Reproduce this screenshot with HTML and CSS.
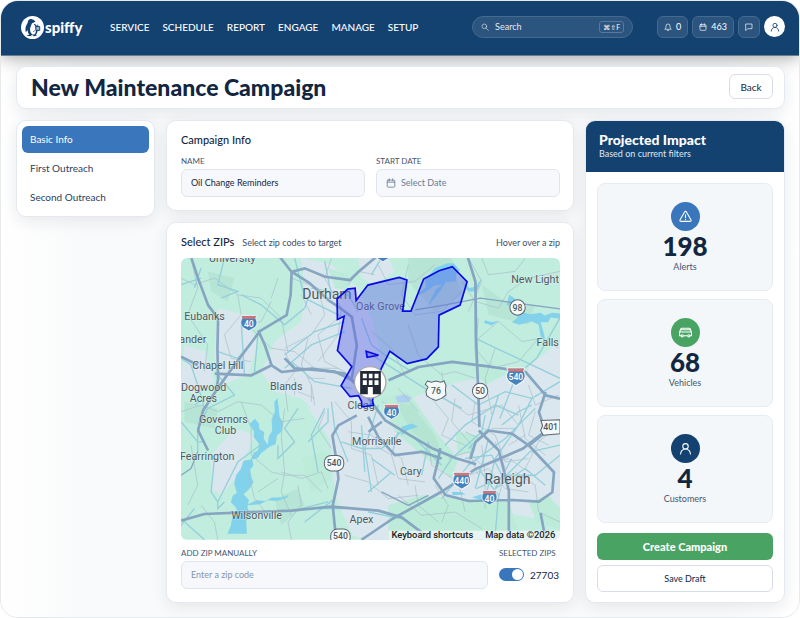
FILE: index.html
```html
<!DOCTYPE html>
<html lang="en">
<head>
<meta charset="utf-8">
<meta name="viewport" content="width=device-width, initial-scale=1">
<title>New Maintenance Campaign</title>
<link rel="stylesheet" href="styles.css">
</head>
<body>
<svg class="defs" width="0" height="0" aria-hidden="true">
  <symbol id="calendar" viewBox="0 0 24 24"><rect x="3" y="5" width="18" height="17" rx="2"/><path d="M3 10h18M8 2v5M16 2v5"/></symbol>
  <symbol id="person" viewBox="0 0 24 24"><circle cx="12" cy="8" r="5"/><path d="M3 22c0-5 4-9 9-9s9 4 9 9"/></symbol>
  <symbol id="shield" viewBox="0 0 64 56"><path d="M6 3h52l-4 8c9 14 5 28-7 34l-15 9-15-9C5 39 1 25 10 11z" fill="#4583bf" stroke="#f5f8fa" stroke-width="3"/><path d="M8 5h48l-4 8H12z" fill="#d9736f"/></symbol>
</svg>
<div class="app">
  <header class="topbar">
    <a class="logo" href="#" aria-label="Spiffy home">
      <svg viewBox="0 0 48 48" aria-hidden="true">
        <circle cx="24" cy="24" r="24" fill="#fff"/>
        <path d="M23 7c-5-2-9 2-9 7-4 6-6 12-4 20l4-5c0 5 2 9 5 11h7c-5-3-8-8-7-14 1-5 3-8 4-11l7-3c-2-3-4-4-7-5z" fill="#134170"/>
        <path d="M26 16c5 5 7 13 4 20l-3 4h4c4-5 5-12 3-17-1-4-4-7-8-7z" fill="#134170"/>
        <path d="M11 41l8-3 3 4zM25 38l9 2-8 3z" fill="#134170"/>
        <path d="M31 22h8v8h-8zM29 30l-3 3M35 22v-4" fill="#9fb6cc" stroke="#134170" stroke-width="2"/>
      </svg>
      <span>spiffy</span>
    </a>
    <nav class="menu" aria-label="Main">
      <a href="#">SERVICE</a><a href="#">SCHEDULE</a><a href="#">REPORT</a><a href="#">ENGAGE</a><a href="#">MANAGE</a><a href="#">SETUP</a>
    </nav>
    <label class="search">
      <svg class="icon" viewBox="0 0 24 24"><circle cx="10" cy="10" r="7"/><path d="M15 15l7 7"/></svg>
      <input type="search" placeholder="Search" aria-label="Search">
      <kbd>⌘⇧F</kbd>
    </label>
    <div class="actions">
      <button class="chip" aria-label="Notifications"><svg class="icon" viewBox="0 0 24 24"><path d="M3 18c2-2 3-4 3-9a6 6 0 0 1 12 0c0 5 1 7 3 9zM10 22h4"/></svg>0</button>
      <button class="chip" aria-label="Appointments"><svg class="icon"><use href="#calendar"/></svg>463</button>
      <button class="chip" aria-label="Messages"><svg class="icon" viewBox="0 0 24 24"><path d="M3 3h18v14H8l-5 5z"/></svg></button>
      <button class="avatar" aria-label="Account"><svg class="icon"><use href="#person"/></svg></button>
    </div>
  </header>

  <div class="page">
    <section class="card titlebar">
      <h1>New Maintenance Campaign</h1>
      <button class="outline back">Back</button>
    </section>

    <div class="columns">
      <nav class="card steps" aria-label="Campaign steps">
        <a class="current" href="#">Basic Info</a>
        <a href="#">First Outreach</a>
        <a href="#">Second Outreach</a>
      </nav>

      <main class="content">
        <section class="card panel">
          <h2>Campaign Info</h2>
          <div class="pair">
            <div>
              <label class="caption" for="name">NAME</label>
              <div class="field"><input id="name" type="text" value="Oil Change Reminders"></div>
            </div>
            <div>
              <label class="caption" for="date">START DATE</label>
              <div class="field"><svg class="icon"><use href="#calendar"/></svg><input id="date" class="date" type="text" placeholder="Select Date"></div>
            </div>
          </div>
        </section>

        <section class="card panel">
          <div class="maphead"><h2>Select ZIPs</h2><span>Select zip codes to target</span><span class="hint">Hover over a zip</span></div>
          <svg class="map" viewBox="0 0 1134 843" role="img" aria-label="Map of zip codes around Durham and Raleigh">
            <rect width="1134" height="843" fill="#c1eddf"/>
            <g fill="#dae7ee">
              <path d="M360 0l90 20 80 70 40 90 30 120-10 100-60 70-110 10-60-60-80-20-40-60 40-90 80-60 10-90z"/>
              <path d="M110 150l80 20 40 90-30 90-80 30-20-90z"/>
              <path d="M380 450l120-20 130 40 80-60 120-40 150-20 154 60v330l-60 40-130-20-70 50-160-10-90 60-110-30-50-110-20-180z"/>
              <path d="M1134 250l-90 70-50 110 90 50 50-30zM530 0l90 0 20 40-60 40-40-20z"/>
              <path d="M90 590l70-80 60 20-50 120-50 60-30-20zM10 260l60 20 30 90-60 40-40-30z"/>
            </g>
            <g fill="#bcebd9">
              <path d="M600 420l80-20 90 130 60 70-20 60-100-80-70-60z"/>
              <path d="M620 740l100-30 120 10 140 10 40 113H620zM360 600l70-20 20 80-60 40zM820 520l70 10-10 50-50 10zM440 30l60 20 10 50-50-10z"/>
              <path d="M870 330l60-20 40 40-60 30zM1040 730l60-20 34 40v60l-70-20z"/>
            </g>
            <g fill="#b1dfcf" opacity=".6">
              <path d="M680 0l130 0 30 110-80 50-80-90zM900 80l100 70 60-10-20 60-120-30zM80 40l80 20-20 70-50-30zM280 720l70-30 20 50-70 60z"/>
              <path d="M10 430l100 20-10 60-90-20zM640 430l50 10 70 90 20 60-90-70z"/>
            </g>
            <g fill="#82d2eb">
              <path d="M221 481l12 14 2 18 14 8-2 18 12 20 4-26 10-16-2-34 10-24-2-28 10-12 4 34 2 22 10 18-4 26-14 12-4 26-18 8-24 18-12 16-16 4 4 18-10 12 4 24 6 14-14 22-16 14 16 16-4 24 8 18-12 22 2 38h-58l10-24 4-22 20-14-10-20-14-14 6-20 12-8-8-28 6-26 14-18 8-24 22-4 8-20 14-8 2-20-16-20 2-14-14-24z"/>
              <path d="M196 739l30-14 26 2 20-10 30 0 20-8-4 8-30 10-28-2-24 12-28 2z"/>
              <path d="M760 30l36-14 20 0 18 20-10 12-2 22-30 2-14 24-40 50 24-52 20-14-24 2-24 18-34 16 34-30-4-18zM848 70l14 20 20-4 18-26-12 34-20 8-14-8z"/>
              <path d="M982 110l18 12-4 14 16 24 34 8 30-4 12 8 22-8 26 2v16l-30-4-8 14-22 0 10 34 4 24-14-16-6-34-20-10-38 10-22-8 18-14-20-30-14-8zM910 186l20 6 20-4-20 14-24-8zM660 505l30-10 20 10-30 10-20 16zM810 700l30 0 12 8-38 2zM870 716l40-12 20 10-30 10z"/>
              <path d="M640 416l30-8 20 10-10 14-30 0z" fill="#afcff0"/>
            </g>
            <g class="minor">
              <path d="M0 60l40 20 60-20 70 50 70 10 60 60 20 100M30 0l20 90-30 80 60 90-10 80M170 110l10 60-50 60 20 70 60 10M330 60l80 30 20 80-40 60-80 40M450 0l-20 60 50 90-10 80-60 80M470 180l-60 50 20 80 60 30M210 210l60 60 70 10 60 50 70 0M310 280l30 60-30 40 10 80M380 240l-20 80 30 60 10 60M0 460l60-20 50 20 60-30 70 10 60 50 70-10M180 430l30 80 0 80 60 50 40 10 60 0 50 50M310 450l-10 80 10 110-10 60 30 70M200 640l20 80 50 60M30 560l20 120-30 60M60 740l40 50 10 53M300 640l60 20 60-20 20 50M230 700l60-40M350 680l10 60-40 50 10 53"/>
              <path d="M590 20l30 60 80-10 60-50M680 20l-20 90 40 60 80-10 60-60M840 70l40 60 70 20 30-50 60-40 94-20M900 0l20 50 80-10 30-40M860 0l40 70-40 90M890 240l60-50 70 60 60-10 50 30M890 180l-10 90 50 60 80-20 60-70M680 200l30 90 70 60 40-10 60 20M570 220l60 50 40 80M780 340l10 80 70 50 100-30 50 60M940 270l-30 90 20 110M750 420l50 60-20 50 70 30"/>
              <path d="M460 430l50 60 0 80 60 20 20 90M500 520l70 10 90 70 20 80M490 650l70 20 60 50 90-10M580 560l50 30 20 70 80 10M740 550l10 70 80 50 20 90M820 420l-10 70 60 70-10 60M880 430l-10 60 70 40 30 80 70-10M800 600l60-20 40 40 80-20 60 40M860 650l60-20 50 60 70 10M900 560l10 90 0 100M940 550l30 80-20 90M1010 440l20 100 60 50M1060 460l-20 70 60 30M1130 500l-60 50-40 80M1000 640l60 40 10 80 64 30M650 710l70 60 100-10 80 50M700 680l10 60 60 50M760 680l40 60-20 50"/>
              <path d="M600 430l50 30M650 390l60 70M430 460l-20 50 40 60M380 360h50M340 360v50M390 380v50M350 400l50 20M180 210l60-20 30-60M270 120l20-60M360 110l30 60M500 80l30-40 50 10M1040 380l20 60 70-30M980 560l50-30M930 510h70M850 520l40 20M870 600l20 50M960 650l-20 40"/>
            </g>
            <g class="street">
              <path d="M60 30l-20 60M130 0l-20 80 60 20-50 20M0 80l60-20M0 300l30 20 20 60 20 70M180 110l60 30 70 60 60-50 10-30M110 280l60 20 60-70-10 110M180 190l10 160M110 350l50 60-80 40-30 60 0 70M0 490l50 60 20 0M40 440l30-20M350 450l-40 60 30 40-50 50 0-40M430 450l-40 80 20 110M440 450v40l-60 60M100 600l-10 100 20 30 60-120 80-60M110 730l0 20 20-20"/>
              <path d="M340 0l30 120M370 120l120 60M430 10l20 100M530 160l-30-50-110-20M310 290l90-70 90-30M330 310l70 60 110 20M490 220l-100 40-80 70M540 180l30 80 40 30 80 50M600 0l-30 50M880 70l0 200 10 120 0 100M880 240l254 120M570 290l160 100 110 60M810 380l80 60 80-40 80 20 84-50M1134 180l-70 120-60 50-50 130M450 430l10 80 40 100M540 500l10 140M590 440l-40 130 20 130M480 550l60 20 60 0 70-60M570 600l70 50M740 550l-20 100M790 560l60-60 90-60 70 30M560 700l70-60M770 660l40-60 90-80 10-50M950 410l-30 100-60 60M1050 420l-40 80-70 100-30 120M960 500l50-40 40-20M850 600l80-10 30 60 100 0 74-60M890 630l60 80-10 120M920 540l-20 80-20 70M990 600l-50 90M780 720l80-100 110-80 90-90M940 690l90-60 60 50M560 760l100 20M370 790l90-70M1134 560l-90 20-70 70-90 40"/>
              <path d="M0 800l40-50M0 780l70 63M360 750l80-20M500 750l-90 0M650 520l-20 70M700 540l80 80"/>
            </g>
            <g class="highway">
              <path d="M31 0l20 61 30 80 30 40-2 90 2 90-5 35-40 60-15 60 30 60M106 396l35-50 95-127 80-48 12-60 3-69-35-45M1091 843l-15-80"/>
              <path d="M591-9l-60 50-25 25-75-10-60-25-40 10 55 35 55 50 30 20 40 30 15 85-15 100M231 216l20 45 20 60 30 20 90-10 100 15 60 60 60 80 75 45 65 38 72 30 60 18"/>
              <path d="M0 295l50 25M271 321l-60 30-110-5M310 300l30 30 120 10 60 30"/>
              <path d="M621 366l90-40 100-15 120 15 100 15 60 70 43 10M856-9l25 80 2 170 8 200 2 65"/>
              <path d="M701 155l90-15 105-20 70 10 168 22" stroke-width="4"/>
              <path d="M866 601l15-50 40-35 70 10 50 35 75 80-5 60-40 28-80-5-130 3-70-18-35-50 10-40 10-50M1041 561l50-40-20-60 20-60M891 516l60 60 30 120 0 147M780 600l-60-20-80 10-50-55-30-60M561 520l40-30"/>
              <path d="M526 471l-55 30-18 30 13 80 5 50-17 80 7 70 20 32M0 786l70-20 120-5 140-5 120-12 140 12 70 20 80 60M540 843l92-62 145-80 105-70 140-60 90-70"/>
              <path d="M0 650l30-20 20-50M600 700l80 40 60-30" stroke-width="4"/>
            </g>
            <g class="places">
              <text x="84" y="12">University</text><text class="city" x="363" y="122">Durham</text><text x="524" y="155">Oak Grove</text>
              <text x="10" y="186">Eubanks</text><text x="-5" y="254">ander</text><text x="34" y="331">Chapel Hill</text>
              <text x="0" y="397">Dogwood</text><text x="26" y="432">Acres</text><text x="266" y="395">Blands</text>
              <text x="498" y="453">Clegg</text><text x="54" y="494">Governors</text><text x="101" y="527">Club</text>
              <text x="-3" y="604">Fearrington</text><text x="512" y="560">Morrisville</text><text x="655" y="650">Cary</text>
              <text class="city" x="908" y="676">Raleigh</text><text x="150" y="780">Wilsonville</text><text x="504" y="792">Apex</text>
              <text x="988" y="75">New Light</text><text x="1064" y="262">Falls</text>
            </g>
            <g class="zip">
              <path d="M559 81l-35 46-3-37-22 3-32 29 1 62 20-10-20 103 43 48-32 57 27 33 25-3 9 16 1 17 35-4-3-15 26-95 26-52 52 37 58-14 35-36 2-95 63-30 21-70-44-45-40 12-46 25-38 96h-25l13-93-23-8z"/>
              <path d="M554 279l37 12-34 6z"/>
            </g>
            <g>
              <use href="#shield" x="174" y="168" width="58" height="54"/>
              <use href="#shield" x="602" y="434" width="56" height="52"/>
              <use href="#shield" x="966" y="326" width="72" height="58"/>
              <use href="#shield" x="806" y="638" width="68" height="56"/>
              <use href="#shield" x="896" y="690" width="54" height="54"/>
              <use href="#shield" x="574" y="-40" width="60" height="54"/>
            </g>
            <g class="badges">
              <circle cx="1007" cy="148" r="23"/><circle cx="895" cy="398" r="23"/>
              <rect x="429" y="591" width="58" height="46" rx="20"/><rect x="448" y="811" width="58" height="46" rx="20"/>
              <path d="M737 368l12 4 14-4 14 4 10-4 6 14-2 12 2 16-14 10-16 6-16-6-12-8-2-14 6-12-8-8zM1077 486l57-2v42l-50 4-8-14 6-14z"/>
            </g>
            <g class="numbers">
              <text x="1007" y="158">98</text><text x="895" y="408">50</text><text x="763" y="406">76</text><text x="458" y="623">540</text><text x="477" y="842">540</text><text x="1106" y="516">401</text>
              <g fill="#fff"><text x="203" y="206">40</text><text x="630" y="473">40</text><text x="1002" y="366">540</text><text x="840" y="677">440</text><text x="923" y="729">40</text></g>
            </g>
            <circle cx="566" cy="372" r="47" fill="#fff" stroke="#a9a9ad" stroke-width="4"/>
            <path fill="#222a35" fill-rule="evenodd" d="M536 338h62v70h-24v-22h-15v22h-23zM544 346v14h12v-14zM562 346v14h11v-14zM579 346v14h12v-14zM544 366v14h12v-14zM562 366v14h11v-14zM579 366v14h12v-14z"/>
            <path d="M621 816h513v27H621z" fill="#f1f6f7" opacity=".8"/>
            <g class="legal"><text x="630" y="838">Keyboard shortcuts</text><text x="910" y="838">Map data ©2026</text></g>
          </svg>
          <div class="zipline">
            <div>
              <label class="caption" for="zip">ADD ZIP MANUALLY</label>
              <div class="field"><input id="zip" type="text" placeholder="Enter a zip code"></div>
            </div>
            <div>
              <div class="caption">SELECTED ZIPS</div>
              <label class="toggle"><input type="checkbox" role="switch" checked><span>27703</span></label>
            </div>
          </div>
        </section>
      </main>

      <aside class="card impact">
        <header><h2>Projected Impact</h2><p>Based on current filters</p></header>
        <div class="stats">
          <div class="stat"><span class="disc blue"><svg class="icon" viewBox="0 0 24 24"><path d="M10 4L2 18c-1 2 0 3 2 3h16c2 0 3-1 2-3L14 4c-1-2-3-2-4 0zM12 9v5M12 17v1"/></svg></span><strong>198</strong><span>Alerts</span></div>
          <div class="stat"><span class="disc green"><svg class="icon" viewBox="0 0 24 24"><path d="M4 18H1v-6l2-6c0-1 1-2 2-2h14c1 0 2 1 2 2l2 6v6h-3M9 18h6M2 11h20M4 7h16"/><circle cx="6" cy="18" r="2"/><circle cx="18" cy="18" r="2"/></svg></span><strong>68</strong><span>Vehicles</span></div>
          <div class="stat"><span class="disc navy"><svg class="icon"><use href="#person"/></svg></span><strong>4</strong><span>Customers</span></div>
          <div class="buttons">
            <button class="create">Create Campaign</button>
            <button class="outline">Save Draft</button>
          </div>
        </div>
      </aside>
    </div>
  </div>
</div>
</body>
</html>
```
FILE: styles.css
```css
* { box-sizing: border-box; }
body, h1, h2, p { margin: 0; }
body {
  background: #fff;
  color: #12263f;
  font: 10px/12px Lato, "Liberation Sans", sans-serif;
}
button, input, kbd { font: inherit; color: inherit; }
button { cursor: pointer; padding: 0; }
a { color: inherit; text-decoration: none; }
.defs { position: absolute; }
.icon { width: 10px; height: 10px; flex: none; fill: none; stroke: currentColor; stroke-width: 2; stroke-linecap: round; stroke-linejoin: round; }

.app {
  min-height: 100vh;
  border: 1px solid #e6eaed;
  border-radius: 18px;
  background: linear-gradient(90deg, #fff, #f9fafb 10%, #f9fafb 90%, #fff);
  overflow: hidden;
}
.topbar {
  display: flex;
  align-items: center;
  height: 55px;
  padding: 0 14px 2px 20px;
  background: #134170;
  color: #fff;
  border-bottom: 1px solid #668099;
  box-shadow: 0 2px 16px rgba(0, 0, 0, .35);
}
.logo { display: flex; align-items: center; gap: 1px; width: 89px; font-size: 15px; font-weight: 900; line-height: 22px; }
.logo svg { width: 23px; height: 23px; }
.menu { display: flex; gap: 13px; font-weight: 500; }
.search {
  display: flex;
  align-items: center;
  gap: 6px;
  width: 161px;
  height: 22px;
  margin: 0 24px 0 auto;
  padding: 0 8px;
  border: 1px solid #46698e;
  border-radius: 11px;
  background: #2b547f;
  font-size: 9px;
}
.search .icon { width: 8px; height: 8px; opacity: .8; }
.search input { flex: 1; min-width: 0; padding: 0; border: 0; outline: 0; background: none; }
.search input::placeholder { color: #e3eaf1; opacity: 1; }
kbd { padding: 0 3px; border: 1px solid #5878a0; border-radius: 3px; font: 7px/10px Lato, "DejaVu Sans", sans-serif; }
.actions { display: flex; gap: 4px; }
.chip {
  display: flex;
  align-items: center;
  gap: 4px;
  height: 22px;
  padding: 0 6px;
  border: 1px solid #46698e;
  border-radius: 6px;
  background: #2b547f;
  font-size: 9px;
}
.chip .icon { width: 8px; height: 8px; }
.avatar { display: grid; place-items: center; width: 21px; height: 21px; border: 0; border-radius: 50%; background: #fff; color: #134170; }

.page { padding: 10px 14px 14px 15px; }
.card { border: 1px solid #e4e9f0; border-radius: 10px; background: #fff; box-shadow: 0 4px 16px rgba(20, 30, 50, .09); }
.titlebar { display: flex; align-items: center; justify-content: space-between; height: 43px; padding: 0 11px 2px 14px; }
h1 { font-family: "Lato Black", Lato, sans-serif; font-size: 23px; font-weight: 900; line-height: 28px; }
.outline { height: 27px; border: 1px solid #d7dde8; border-radius: 6px; background: #fff; }
.back { width: 44px; height: 25px; }

.columns { display: grid; grid-template-columns: 139px 1fr 200px; align-items: start; gap: 11px; margin-top: 11px; }
.steps { display: grid; gap: 2px; padding: 5px; }
.steps a { padding: 0 8px; border-radius: 6px; line-height: 27px; color: #2b405b; }
.steps .current { background: #3a76bb; color: #fff; }
.content { display: grid; gap: 11px; }
.panel { padding: 10px 13px 13px 14px; }
h2 { font-size: 11px; font-weight: 500; line-height: 18px; }
.pair { display: grid; grid-template-columns: 1fr 1fr; gap: 11px; margin-top: 6px; }
.caption { display: block; margin-bottom: 2px; font-size: 8px; line-height: 12px; color: #45566d; }
.field { display: flex; align-items: center; gap: 5px; height: 28px; padding: 0 9px; border: 1px solid #dfe5ef; border-radius: 6px; background: #f6f8fc; font-size: 9px; }
.field .icon { color: #6b7f98; }
.field input { flex: 1; min-width: 0; padding: 0; border: 0; outline: 0; background: none; }
.field input::placeholder { color: #8594aa; opacity: 1; }
.field .date::placeholder { color: #6b7d94; }
.maphead { display: flex; align-items: baseline; gap: 8px; font-size: 9px; color: #3d5068; }
.maphead h2 { color: #12263f; }
.hint { margin-left: auto; }
.map { display: block; width: 100%; margin-top: 7px; border-radius: 6px; }
.minor { fill: none; stroke: #a8bdc7; stroke-width: 2; }
.street { fill: none; stroke: #94cfda; stroke-width: 4; }
.highway { fill: none; stroke: #86a5c0; stroke-width: 8; stroke-linejoin: round; }
.zip { fill: rgba(90, 100, 230, .42); stroke: #0909e8; stroke-width: 5; }
.places { font: 32px Roboto, sans-serif; fill: #4b5960; paint-order: stroke; stroke: rgba(235, 246, 245, .6); stroke-width: 3; }
.places .city { font-size: 42px; }
.badges { fill: #f4f8f8; stroke: #59666c; stroke-width: 3; }
.numbers { font: 500 26px Roboto, sans-serif; fill: #4b5960; text-anchor: middle; }
.legal { font: 500 28px Roboto, sans-serif; fill: #1c2124; }
.zipline { display: grid; grid-template-columns: 1fr 61px; gap: 11px; margin-top: 7px; }
.toggle { display: flex; align-items: center; gap: 6px; height: 28px; font-size: 10px; }
.toggle input { appearance: none; flex: none; width: 25px; height: 13px; margin: 0; padding: 1px; border-radius: 7px; background: #3a76bb; }
.toggle input::before { content: ""; display: block; width: 11px; height: 11px; border-radius: 50%; background: #fff; }
.toggle input:checked::before { margin-left: auto; }

.impact { overflow: hidden; }
.impact header { padding: 10px 13px 12px; background: #134170; color: #fff; }
.impact h2 { font-size: 14px; font-weight: 900; line-height: 17px; }
.impact p { font-size: 9px; line-height: 12px; color: #dfe8f2; }
.stats { display: grid; gap: 8px; padding: 11px 11px 10px; }
.stat { display: flex; flex-direction: column; align-items: center; height: 108px; padding-top: 18px; border: 1px solid #e6ecf3; border-radius: 8px; background: #f3f7fa; color: #45566d; font-size: 9px; }
.stat strong { color: #12263f; font-family: "Lato Black", Lato, sans-serif; font-size: 26px; font-weight: 900; line-height: 30px; }
.disc { display: grid; place-items: center; width: 29px; height: 29px; border-radius: 50%; color: #fff; }
.disc .icon { width: 13px; height: 13px; }
.blue { background: #3a76bb; }
.green { background: #49a464; }
.navy { background: #134170; }
.buttons { display: grid; gap: 5px; margin-top: 2px; }
.create { height: 27px; border: 0; border-radius: 6px; background: #49a464; color: #fff; font-size: 11px; font-weight: 900; }
.buttons .outline { font-size: 9px; }
```
